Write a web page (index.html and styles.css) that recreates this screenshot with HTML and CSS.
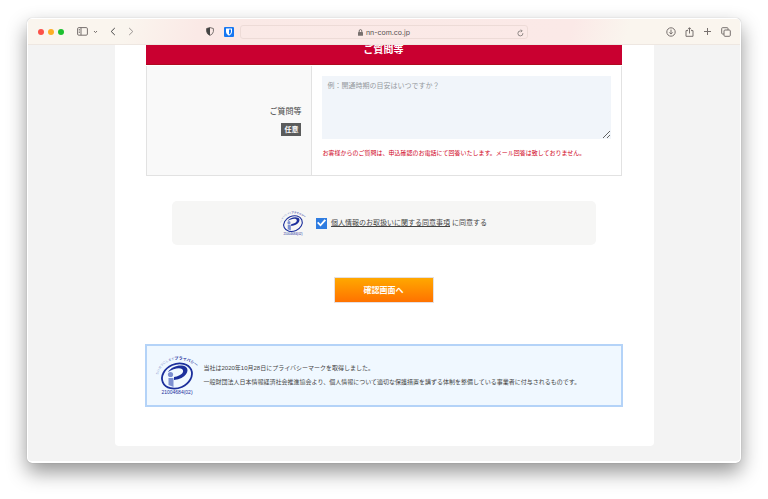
FILE: index.html
```html
<!DOCTYPE html>
<html lang="ja">
<head>
<meta charset="utf-8">
<meta name="viewport" content="width=device-width, initial-scale=1">
<title>ご質問等</title>
<link rel="stylesheet" href="styles.css">
</head>
<body>
<div class="window">
  <header class="toolbar">
    <div class="tools tools-left">
      <span class="lights"><i class="red"></i><i class="yellow"></i><i class="green"></i></span>
      <button class="tool sidebar" type="button" aria-label="サイドバー"><svg width="11" height="9" viewBox="0 0 11 9"><rect x=".6" y=".6" width="9.800" height="7.600" rx="1.200"/><path d="M4 .6V8.200M1.800 2.500h1M1.800 4h1M1.800 5.500h1"/></svg></button>
      <button class="tool chevron" type="button" aria-label="タブグループ"><svg width="5" height="4" viewBox="0 0 5 4"><path d="M1 1L2.500 2.600L4 1"/></svg></button>
      <button class="tool back" type="button" aria-label="戻る"><svg width="6" height="9" viewBox="0 0 6 9"><path class="strong" d="M4.800 1L1.200 4.500L4.800 8"/></svg></button>
      <button class="tool forward" type="button" aria-label="進む"><svg width="6" height="9" viewBox="0 0 6 9"><path d="M1.200 1L4.800 4.500L1.200 8"/></svg></button>
      <span class="extensions">
        <button class="tool" type="button" aria-label="プライバシーレポート"><svg width="8" height="9" viewBox="0 0 8 9"><path d="M4 .6L7.400 1.500V4.500Q7.200 7 4 8.400Q.8 7 .6 4.500V1.500Z"/><path class="dark" d="M4 .6V8.400Q.8 7 .6 4.500V1.500Z"/></svg></button>
        <button class="tool" type="button" aria-label="パスワード管理"><svg width="10" height="10" viewBox="0 0 10 10"><rect class="blue" width="10" height="10" rx="1"/><path class="white" d="M2 1.500H8V5Q7.800 7.500 5 8.800Q2.200 7.500 2 5Z"/><path class="blue" d="M5 2.500H7V5Q6.800 6.700 5 7.600Z"/></svg></button>
      </span>
    </div>
    <div class="address">
      <span class="url"><svg width="5" height="7" viewBox="0 0 5 7"><rect class="lock" y="3" width="5" height="3.800" rx=".6"/><path d="M1.200 3V2Q1.200 .6 2.500 .6Q3.800 .6 3.800 2V3"/></svg>nn-com.co.jp</span>
      <button class="tool reload" type="button" aria-label="再読み込み"><svg width="7" height="8" viewBox="0 0 7 8"><path d="M5.900 4.200A2.500 2.500 0 1 1 3.400 1.900H5M3.900 .6L5.200 1.900L3.900 3.200"/></svg></button>
    </div>
    <div class="tools tools-right">
      <button class="tool" type="button" aria-label="ダウンロード"><svg width="10" height="10" viewBox="0 0 10 10"><circle cx="5" cy="5" r="4.200"/><path d="M5 2.600V7M3.300 5.400L5 7.100L6.700 5.400"/></svg></button>
      <button class="tool" type="button" aria-label="共有"><svg width="9" height="10" viewBox="0 0 9 10"><path d="M3 3.600H1V9.300H8V3.600H6M4.500 6.500V.8M2.900 2.300L4.500 .7L6.100 2.300"/></svg></button>
      <button class="tool" type="button" aria-label="新規タブ"><svg width="9" height="9" viewBox="0 0 9 9"><path d="M4.500 1V8M1 4.500H8"/></svg></button>
      <button class="tool" type="button" aria-label="タブ一覧"><svg width="10" height="10" viewBox="0 0 10 10"><rect x="3" y="3" width="6.300" height="6.300" rx="1"/><path d="M3 7H1.500Q.7 7 .7 6.200V1.500Q.7 .7 1.500 .7H6.200Q7 .7 7 1.500V3"/></svg></button>
    </div>
  </header>
  <div class="viewport">
    <main class="page">
      <form>
        <section class="question">
          <h2>ご質問等</h2>
          <div class="row">
            <div class="row-label"><label for="question">ご質問等</label><span class="badge">任意</span></div>
            <div class="row-field">
              <textarea id="question" placeholder="例：開通時期の目安はいつですか？"></textarea>
              <p>お客様からのご質問は、申込確認のお電話にて回答いたします。メール回答は致しておりません。</p>
            </div>
          </div>
        </section>
        <div class="consent">
          <svg class="mark" width="26" height="26" viewBox="0 0 42 42" role="img" aria-label="プライバシーマーク"><use href="#privacy-mark"/></svg>
          <input type="checkbox" id="agree" checked>
          <label for="agree"><a href="#terms">個人情報のお取扱いに関する同意事項</a> に同意する</label>
        </div>
        <button class="submit" type="submit">確認画面へ</button>
      </form>
      <section class="notice">
        <svg class="mark" width="42" height="42" viewBox="0 0 42 42" role="img" aria-label="プライバシーマーク">
          <g id="privacy-mark">
            <path id="mark-arc" d="M2 21C5 4 27 0 42 14" fill="none"/>
            <ellipse cx="21" cy="22" rx="15.500" ry="12" transform="rotate(-24 21 22)" fill="none" stroke="#1c2f9c" stroke-width="1.800"/>
            <path d="M12 18C16 12 25 10 30 13C34 16 30 25 18 26L18 23C26 22 29 17 26 15C23 13 17 15 12 18Z" fill="#1c2f9c"/>
            <circle cx="14.500" cy="20.500" r="2.600" fill="#7d8fd0"/>
            <path d="M12.500 24H17.500V33L12.500 31Z" fill="#7d8fd0"/>
            <text class="mark-small"><textPath href="#mark-arc" startOffset="0">たいせつにします<tspan class="mark-bold">プライバシー</tspan></textPath></text>
            <text class="mark-number" x="21" y="40" text-anchor="middle">21004684(02)</text>
          </g>
        </svg>
        <div>
          <p>当社は2020年10月28日にプライバシーマークを取得しました。</p>
          <p>一般財団法人日本情報経済社会推進協会より、個人情報について適切な保護措置を講ずる体制を整備している事業者に付与されるものです。</p>
        </div>
      </section>
    </main>
  </div>
</div>
</body>
</html>
```
FILE: styles.css
```css
* { box-sizing: border-box; }

body {
  margin: 0;
  padding: 18px 27px 37px;
  min-height: 100vh;
  display: flex;
  background: #fff;
  color: #444;
  font: 7px/14px "Liberation Sans", "Noto Sans CJK JP", sans-serif;
}

h2, p { margin: 0; }
button, textarea, input { font-family: inherit; }

.window {
  flex: 1;
  min-width: 0;
  display: flex;
  flex-direction: column;
  overflow: hidden;
  border: 1px solid #fff;
  border-bottom-width: 2px;
  border-radius: 5px;
  background: #f3f3f3;
  box-shadow: 0 0 1px rgba(0, 0, 0, .3), 0 9px 20px rgba(0, 0, 0, .42);
}

.toolbar {
  height: 26px;
  flex: none;
  display: grid;
  grid-template-columns: 1fr 288px 1fr;
  align-items: center;
  border-bottom: 1px solid #eee7e1;
  background: linear-gradient(105deg, #faf5ee 14%, #fae9e6 24%, #fbe9e7 76%, #faf5ee 84%);
}

.tools { display: flex; align-items: center; }
.tools-left { padding: 0 6px 0 10px; }
.tools-right { justify-content: flex-end; gap: 9px; padding-right: 9px; }
.extensions { display: flex; gap: 10px; margin-left: auto; }

.tool {
  display: flex;
  padding: 0;
  border: 0;
  background: none;
}
.tool svg, .url svg { fill: none; stroke: #77706e; stroke-width: 1; }
.tool .strong { stroke: #444; }
.tool .dark { fill: #444; stroke: none; }
.tool .blue { fill: #1677f2; stroke: none; }
.tool .white { fill: #fff; stroke: none; }
.url .lock { fill: #77706e; stroke: none; }
.reload svg { stroke: #8f8886; }
.sidebar { margin-left: 13px; }
.chevron { margin-left: 5px; }
.back { margin-left: 12px; }
.forward { margin-left: 12px; }
.forward svg { stroke: #9a9492; }

.lights { display: flex; gap: 4px; }
.lights i { width: 6px; height: 6px; border-radius: 50%; }
.red { background: #fc5149; }
.yellow { background: #fdae25; }
.green { background: #1dc02f; }

.address {
  height: 14px;
  display: grid;
  grid-template-columns: 1fr auto;
  align-items: center;
  padding: 0 3px 0 10px;
  border: 1px solid #eddbd7;
  border-radius: 3px;
}
.url {
  display: flex;
  justify-content: center;
  align-items: center;
  gap: 3px;
  font-family: Inter, sans-serif;
  color: #55504f;
}

.viewport {
  flex: 1;
  display: flex;
  justify-content: center;
  overflow: hidden;
  padding-bottom: 15px;
}

.page {
  flex: 1;
  min-width: 0;
  max-width: 539px;
  padding: 0 31px 39px 30px;
  border-radius: 0 0 4px 4px;
  background: #fff;
}

.question { margin: 0 1px; }
.question h2 {
  height: 29px;
  margin-top: -9px;
  border-bottom: 1px solid #b00a20;
  background: #c90030;
  color: #fff;
  font-size: 10px;
  line-height: 28px;
  text-align: center;
}
.row {
  display: grid;
  grid-template-columns: 35% 1fr;
  margin-top: 1px;
  border: 1px solid #e2e2e2;
  border-width: 0 1px 1px;
}
.row-label {
  display: flex;
  flex-direction: column;
  align-items: flex-end;
  justify-content: center;
  gap: 4px;
  padding-right: 10px;
  border-right: 1px solid #e2e2e2;
  background: #f9f9f9;
  font-size: 8px;
}
.badge {
  padding: 0 3px;
  background: #5b5c5c;
  color: #fff;
  font-size: 7px;
  font-weight: bold;
  line-height: 13px;
}
.row-field { padding: 10px 10px 15px; }
.row-field textarea {
  display: block;
  width: 100%;
  height: 63px;
  padding: 3px 5px;
  border: 0;
  background: #f1f5fa;
  color: #444;
  font-size: 7px;
  line-height: 13px;
  resize: vertical;
}
.row-field textarea::placeholder { color: #969b9f; }
.row-field p {
  margin-top: 7px;
  color: #d0021b;
  font-size: 6px;
}

.consent {
  display: flex;
  align-items: center;
  justify-content: center;
  height: 44px;
  margin: 25px 27px 0;
  border-radius: 5px;
  background: #f6f6f5;
}
.consent input {
  appearance: none;
  display: grid;
  place-items: center;
  width: 11px;
  height: 11px;
  margin: 0 4px 0 10px;
  background: #2f7ce0;
}
.consent input:checked::before {
  content: "";
  width: 9px;
  height: 8px;
  background: #fff;
  clip-path: polygon(0 50%, 14% 34%, 38% 62%, 84% 4%, 100% 18%, 39% 94%);
}
.consent a {
  color: inherit;
  text-decoration: underline;
  text-underline-offset: 1px;
}

.submit {
  display: block;
  width: 100px;
  height: 26px;
  margin: 32px auto 0;
  padding: 0 0 2px;
  border: 1px solid #e6dfdf;
  background: linear-gradient(#ffa800, #ff7200);
  color: #fff;
  font-size: 8px;
  font-weight: bold;
}

.notice {
  display: flex;
  align-items: center;
  gap: 6px;
  height: 63px;
  margin-top: 41px;
  padding: 0 0 2px 9px;
  border: 2px solid #b4d3f8;
  background: #f0f8ff;
  font-size: 6px;
}
.mark { flex: none; overflow: visible; }
.mark-small { fill: #6b7bc0; font-size: 3px; }
.mark-bold { fill: #1c2f9c; font-size: 4px; font-weight: bold; }
.mark-number { fill: #1c2f9c; font-size: 5px; }
```
